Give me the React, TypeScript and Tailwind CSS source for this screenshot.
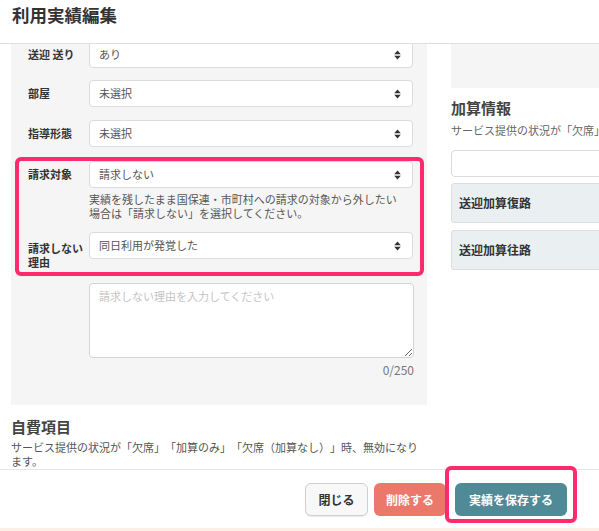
import React from "react";

function Arrows() {
  return (
    <svg width="7" height="10" viewBox="0 0 7 10" className="shrink-0">
      <path d="M3.5 0.5L6.8 4.2H0.2z M3.5 9.5L0.2 5.8h6.6z" fill="#333" />
    </svg>
  );
}

function FakeSelect({ value }: { value: string }) {
  return (
    <div className="flex h-[27px] w-[324px] items-center justify-between rounded-[4px] border border-[#dcdcdc] bg-white pl-[9px] pr-[11px] text-[11px] text-[#555]">
      <span>{value}</span>
      <Arrows />
    </div>
  );
}

function Row({
  label,
  value,
  className,
  labelClass,
}: {
  label: React.ReactNode;
  value: string;
  className?: string;
  labelClass?: string;
}) {
  return (
    <div className={"flex items-start " + (className ?? "")}>
      <div
        className={
          "w-[61px] shrink-0 text-[11px] font-bold leading-[14px] text-[#333] " +
          (labelClass ?? "pt-[6px]")
        }
      >
        {label}
      </div>
      <FakeSelect value={value} />
    </div>
  );
}

export default function App() {
  return (
    <div className="relative flex h-[531px] w-[599px] flex-col overflow-hidden bg-white font-['Noto_Sans_CJK_JP','Noto_Sans',sans-serif] [text-spacing-trim:space-all]">
      {/* header */}
      <div className="h-[44px] shrink-0 border-b border-[#dedede] bg-white pl-[12px] pt-[3px]">
        <h1 className="text-[17.5px] font-bold leading-[24px] text-[#333]">利用実績編集</h1>
      </div>

      {/* body */}
      <div className="relative flex-1 overflow-hidden">
        <div className="-mt-[3px] pl-[11px]">
          <div className="flex gap-[24px]">
            {/* left panel */}
            <div className="w-[416px] shrink-0 bg-[#f5f5f5] pb-[28px] pl-[17px]">
              <Row label="送迎 送り" value="あり" />
              <Row label="部屋" value="未選択" className="mt-[12px]" />
              <Row label="指導形態" value="未選択" className="mt-[13px]" />
              <Row label="請求対象" value="請求しない" className="mt-[14px]" />
              <p className="mt-[4px] pl-[61px] text-[11px] leading-[14px] text-[#555]">
                実績を残したまま国保連・市町村への請求の対象から外したい
                <br />
                場合は「請求しない」を選択してください。
              </p>
              <Row
                label={
                  <>
                    請求しない
                    <br />
                    理由
                  </>
                }
                value="同日利用が発覚した"
                className="mt-[12px]"
                labelClass="pt-[9px]"
              />
              <div className="mt-[14px] pl-[61px]">
                <textarea
                  readOnly
                  placeholder="請求しない理由を入力してください"
                  className="block h-[75px] w-[325px] rounded-[4px] border border-[#d4d4d4] bg-white px-[9px] pt-[5px] text-[11px] leading-[14px] text-[#555] outline-none placeholder:text-[#c4c4c4]"
                />
                <div className="mt-[5px] w-[325px] text-right text-[12px] leading-[14px] text-[#777]">
                  0/250
                </div>
              </div>
            </div>

            {/* right column */}
            <div className="w-[300px] shrink-0">
              <div className="h-[47px] bg-[#f5f5f5]" />
              <h2 className="mt-[10px] text-[15px] font-bold leading-[20px] text-[#444]">加算情報</h2>
              <p className="mt-[5px] whitespace-nowrap text-[11px] leading-[14px] text-[#666]">
                サービス提供の状況が「欠席」「加算のみ」「欠席（加算なし）」時、無効になります。
              </p>
              <div className="mt-[13px] h-[27px] rounded-[4px] border border-[#dcdcdc] bg-white" />
              <div className="mt-[6px] flex h-[40px] items-center rounded-[3px] border border-[#dedede] bg-[#eaf0f2] pl-[7px] text-[12px] font-bold text-[#333]">
                送迎加算復路
              </div>
              <div className="mt-[7px] flex h-[40px] items-center rounded-[3px] border border-[#dedede] bg-[#eaf0f2] pl-[7px] text-[12px] font-bold text-[#333]">
                送迎加算往路
              </div>
            </div>
          </div>

          {/* 自費項目 */}
          <h2 className="mt-[12px] text-[15px] font-bold leading-[20px] text-[#444]">自費項目</h2>
          <p className="mt-[3px] w-[412px] text-[11px] leading-[14px] text-[#555]">
            サービス提供の状況が「欠席」「加算のみ」「欠席（加算なし）」時、無効になります。
          </p>
        </div>
      </div>

      {/* footer */}
      <div className="flex h-[59px] shrink-0 items-start justify-end gap-[6px] border-t border-[#e6e6e6] bg-white pr-[32px] pt-[13px]">
        <button className="h-[33px] w-[63px] rounded-[6px] border border-[#cfcfcf] bg-[#f8f8f8] text-[12px] font-bold text-[#333] shadow-[0_1px_1px_rgba(0,0,0,0.08)]">
          閉じる
        </button>
        <button className="h-[33px] w-[72px] rounded-[6px] bg-[#ec786c] text-[12px] font-bold text-white">
          削除する
        </button>
        <button className="ml-[3px] h-[33px] w-[112px] rounded-[6px] bg-[#508a96] text-[12px] font-bold text-white">
          実績を保存する
        </button>
      </div>
      <div className="h-[3px] shrink-0 bg-[#fcefe5]" />

      {/* annotation overlays */}
      <div className="pointer-events-none absolute left-[15px] top-[157px] h-[119px] w-[409px] rounded-[6px] border-[4px] border-[#ff2a6b]" />
      <div className="pointer-events-none absolute left-[445px] top-[466px] h-[57px] w-[132px] rounded-[6px] border-[4px] border-[#ff2a6b]" />
    </div>
  );
}
